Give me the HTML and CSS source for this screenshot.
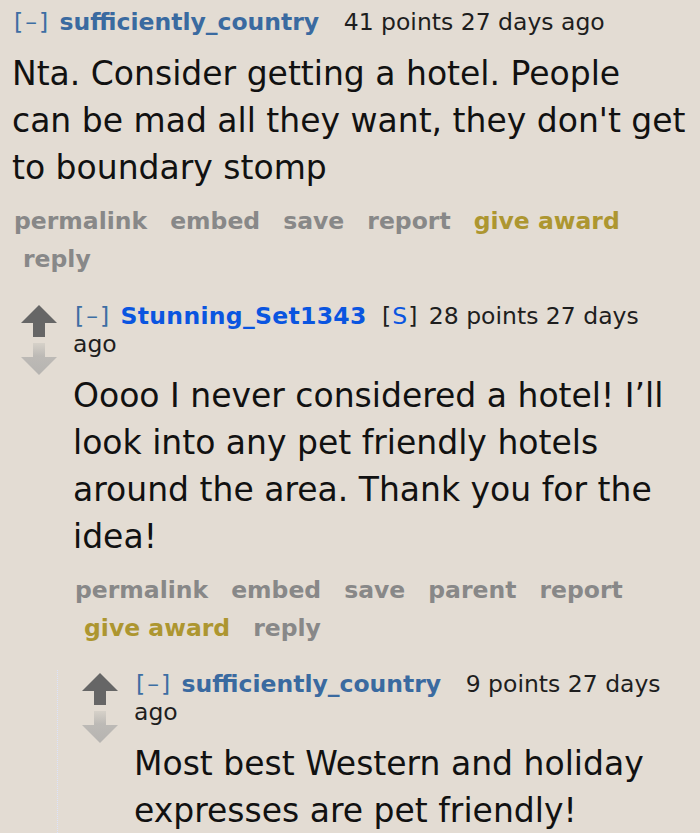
FILE: index.html
```html
<!DOCTYPE html>
<html lang="en">
<head>
<meta charset="utf-8">
<title>Comments</title>
<link rel="stylesheet" href="styles.css">
</head>
<body>
<div class="thread">
  <div class="comment top">
    <div class="entry">
      <div class="tagline"><span class="expand">[–]</span> <a class="author">sufficiently_country</a> <span class="score">41 points</span> 27 days ago</div>
      <div class="md">Nta. Consider getting a hotel. People<br>can be mad all they want, they don't get to boundary stomp</div>
      <div class="buttons">
        <div class="brow"><a>permalink</a><a>embed</a><a>save</a><a>report</a><a class="gild">give award</a></div>
        <div class="brow indent"><a>reply</a></div>
      </div>
    </div>
    <div class="child first">
      <div class="comment">
        <div class="row">
          <div class="midcol">
            <svg class="arrows" width="36" height="70" viewBox="0 0 36 70" aria-hidden="true">
              <defs>
                <linearGradient id="dg1" x1="0" y1="0" x2="0" y2="1">
                  <stop offset="0" stop-color="#d6d1c9"/>
                  <stop offset="0.4" stop-color="#bdbab6"/>
                  <stop offset="1" stop-color="#b6b4b1"/>
                </linearGradient>
              </defs>
              <polygon points="18,0 36,18 24,18 24,32 12,32 12,18 0,18" fill="#666666"/>
              <polygon points="12,38 24,38 24,52 36,52 18,70 0,52 12,52" fill="url(#dg1)"/>
            </svg>
          </div>
          <div class="entry">
            <div class="tagline"><span class="expand">[–]</span> <a class="author submitter">Stunning_Set1343</a> <span class="flair">[<span class="s">S</span>]</span> <span class="score">28 points</span> 27 days ago</div>
            <div class="md">Oooo I never considered a hotel! I’ll look into any pet friendly hotels around the area. Thank you for the idea!</div>
            <div class="buttons">
              <div class="brow"><a>permalink</a><a>embed</a><a>save</a><a>parent</a><a>report</a></div>
              <div class="brow indent"><a class="gild">give award</a><a>reply</a></div>
            </div>
          </div>
        </div>
        <div class="child">
          <div class="comment">
            <div class="row">
              <div class="midcol">
                <svg class="arrows" width="36" height="70" viewBox="0 0 36 70" aria-hidden="true">
                  <defs>
                    <linearGradient id="dg2" x1="0" y1="0" x2="0" y2="1">
                      <stop offset="0" stop-color="#d6d1c9"/>
                      <stop offset="0.4" stop-color="#bdbab6"/>
                      <stop offset="1" stop-color="#b6b4b1"/>
                    </linearGradient>
                  </defs>
                  <polygon points="18,0 36,18 24,18 24,32 12,32 12,18 0,18" fill="#666666"/>
                  <polygon points="12,38 24,38 24,52 36,52 18,70 0,52 12,52" fill="url(#dg2)"/>
                </svg>
              </div>
              <div class="entry">
                <div class="tagline"><span class="expand">[–]</span> <a class="author">sufficiently_country</a> <span class="score">9 points</span> 27 days ago</div>
                <div class="md">Most best Western and holiday expresses are pet friendly!</div>
              </div>
            </div>
          </div>
        </div>
      </div>
    </div>
  </div>
</div>
</body>
</html>
```
FILE: styles.css
```css
html, body {
  margin: 0;
  padding: 0;
  background: #e3dcd3;
}
body {
  font-family: "DejaVu Sans", Verdana, sans-serif;
  color: #222222;
  overflow: hidden;
  height: 833px;
}
.thread {
  padding-top: 8px;
  padding-right: 8px;
}
.top > .entry {
  padding-left: 12px;
}
.row {
  display: flex;
  align-items: flex-start;
}
.midcol {
  width: 36px;
  flex: none;
  margin-right: 16px;
  padding-top: 3px;
}
.arrows {
  display: block;
}
.entry {
  flex: 1;
  min-width: 0;
}
.tagline {
  font-size: 23.5px;
  line-height: 28px;
  color: #1e1e1e;
  padding-right: 24px;
}
.expand {
  color: #3d6ea3;
  padding-left: 2px;
  letter-spacing: 2px;
  margin-right: 2px;
}
.author {
  font-weight: bold;
  color: #3a6aa0;
  margin-right: 17px;
}
.author.submitter {
  color: #0a55e0;
  letter-spacing: 0.3px;
  margin-right: 8px;
}
.flair {
  letter-spacing: 1px;
  margin-right: 3px;
}
.flair .s {
  color: #0a55e0;
}
.md {
  font-size: 33px;
  line-height: 47px;
  color: #111111;
  margin-top: 14px;
  margin-bottom: 11px;
}
.buttons {
  font-size: 23.5px;
  line-height: 38px;
  font-weight: bold;
}
.brow {
  display: flex;
  gap: 23px;
  padding-left: 2px;
}
.brow.indent {
  padding-left: 11px;
}
.brow a {
  color: #888888;
}
.brow a.gild {
  color: #ad9630;
}
.child {
  margin-top: 23px;
  margin-left: 36px;
  border-left: 1px dotted #dde3fb;
  padding-left: 24px;
}
.child.first {
  margin-left: 0;
  border-left: none;
  padding-left: 21px;
  margin-top: 24px;
}
```
